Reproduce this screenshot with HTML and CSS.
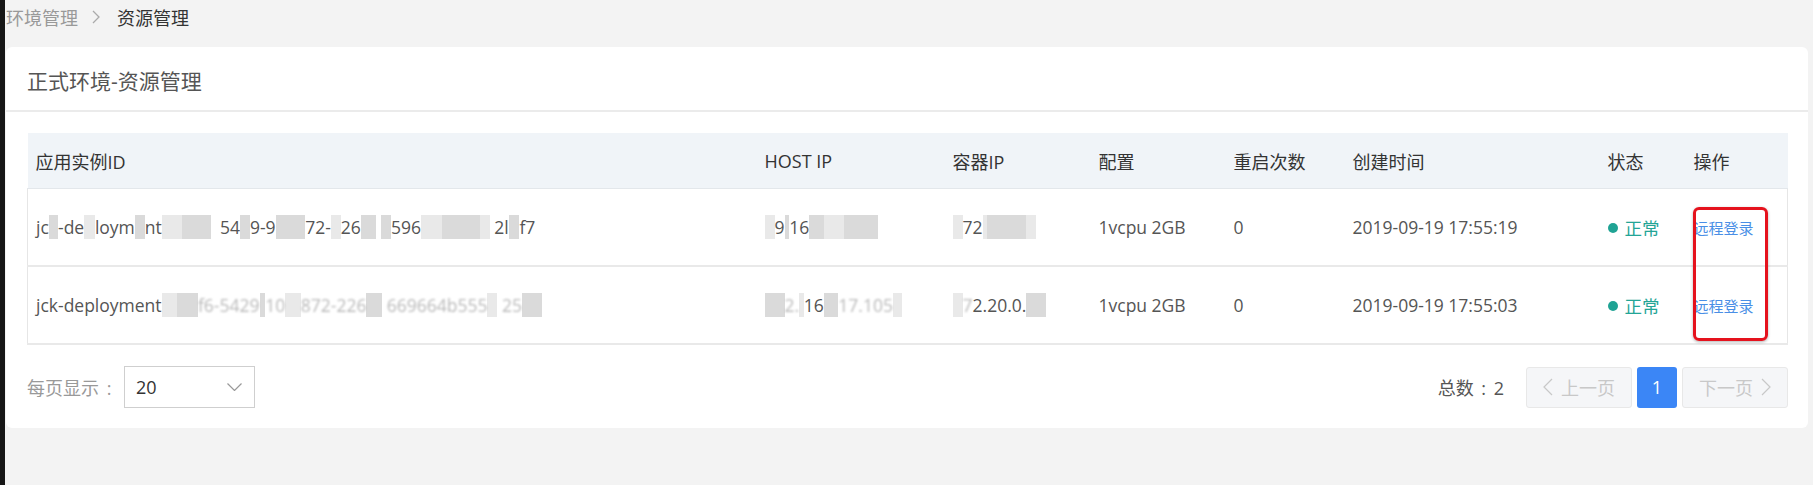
FILE: index.html
```html
<!DOCTYPE html>
<html lang="zh-CN">
<head>
  <meta charset="UTF-8" />
  <title>资源管理</title>
  <link rel="stylesheet" href="styles.css">
</head>
<body>
  <div class="page">

    <div class="breadcrumb">
      <span class="crumb">环境管理</span>
      <svg class="sep" width="8" height="14" viewBox="0 0 8 14"><polyline points="1,1 7,7 1,13" fill="none" stroke="#aaa" stroke-width="1.3"/></svg>
      <span class="crumb current">资源管理</span>
    </div>

    <div class="card">
      <div class="card-head">正式环境-资源管理</div>

      <div class="card-body">
        <div class="table-wrap">
          <table class="res-table">
            <colgroup>
              <col style="width:729px">
              <col style="width:188px">
              <col style="width:146px">
              <col style="width:135px">
              <col style="width:119px">
              <col style="width:255px">
              <col style="width:86px">
              <col>
            </colgroup>
            <thead>
              <tr>
                <th>应用实例ID</th>
                <th>HOST IP</th>
                <th>容器IP</th>
                <th>配置</th>
                <th>重启次数</th>
                <th>创建时间</th>
                <th>状态</th>
                <th>操作</th>
              </tr>
            </thead>
            <tbody>
              <tr>
                <td>jc<span class="m">k</span>-de<span class="m lt">p</span>loym<span class="m">e</span>nt<span class="m lt">-j7</span><span class="m">d8c</span>&nbsp;&nbsp;54<span class="m">2</span>9-9<span class="m">a4e</span>72-<span class="m lt">4</span>26<span class="m">8-</span>&nbsp;<span class="m">8</span>596<span class="m lt">6b</span><span class="m">0c1e</span><span class="m lt">a</span>&nbsp;2l<span class="m">b</span>f7</td>
                <td><span class="m lt">1</span>9<span class="m">.</span>16<span class="m">8.</span><span class="m lt">17</span><span class="m">.200</span></td>
                <td><span class="m lt">1</span>72<span class="m lt">.</span><span class="m">20.0.</span><span class="m lt">9</span></td>
                <td>1vcpu 2GB</td>
                <td>0</td>
                <td>2019-09-19 17:55:19</td>
                <td><span class="status"><i class="dot"></i>正常</span></td>
                <td><a class="link" href="#">远程登录</a></td>
              </tr>
              <tr>
                <td>jck-deployment<span class="m lt">-7</span><span class="m">d8</span><span class="fz">f6-5429</span><span class="m">-</span><span class="fz">10</span><span class="m lt">-4</span><span class="fz">872-226</span><span class="m">4-</span>&nbsp;<span class="fz">669664b555</span><span class="m lt">1</span>&nbsp;<span class="fz">25</span><span class="m">ab</span></td>
                <td><span class="m">19</span><span class="fz">2.</span><span class="m lt">.</span>16<span class="m">8.</span><span class="fz">17.105</span><span class="m lt">..</span></td>
                <td><span class="m lt">1</span><span class="fz">7</span>2.20.0.<span class="m">15</span></td>
                <td>1vcpu 2GB</td>
                <td>0</td>
                <td>2019-09-19 17:55:03</td>
                <td><span class="status"><i class="dot"></i>正常</span></td>
                <td><a class="link" href="#">远程登录</a></td>
              </tr>
            </tbody>
          </table>
          <!-- annotation box drawn over the action column -->
          <div class="mark"></div>
        </div>

        <div class="pager">
          <div class="pager-left">
            <span class="label">每页显示<span class="colon">:</span></span>
            <div class="select">
              <span>20</span>
              <svg width="15" height="8" viewBox="0 0 15 8"><polyline points="0.5,0.5 7.5,7.5 14.5,0.5" fill="none" stroke="#999" stroke-width="1.2"/></svg>
            </div>
          </div>
          <div class="pager-right">
            <span class="total">总数<span class="colon">:</span>2</span>
            <span class="page-btn disabled">
              <svg width="10" height="18" viewBox="0 0 10 18"><polyline points="9,1 1,9 9,17" fill="none" stroke="#c8c8c8" stroke-width="1.2"/></svg>
              上一页
            </span>
            <span class="page-btn num">1</span>
            <span class="page-btn disabled">
              下一页
              <svg width="10" height="18" viewBox="0 0 10 18"><polyline points="1,1 9,9 1,17" fill="none" stroke="#c8c8c8" stroke-width="1.2"/></svg>
            </span>
          </div>
        </div>
      </div>
    </div>

  </div>
</body>
</html>
```

FILE: styles.css
```css
body {
  margin: 0;
  background: #f3f3f3;
  font-family: "Open Sans", "Noto Sans CJK SC", sans-serif;
  color: #555;
}

.page {
  min-height: 485px;
  border-left: 5px solid #161616;
  padding: 0 5px 0 1px;
  box-sizing: border-box;
}

/* breadcrumb */
.breadcrumb {
  display: flex;
  align-items: center;
  height: 34px;
  font-size: 18px;
  color: #999;
}

.breadcrumb .sep {
  margin: 0 17px 0 14px;
}

.breadcrumb .current {
  color: #333;
}

/* card */
.card {
  margin-top: 13px;
  background: #fff;
  border-radius: 6px;
}

.card-head {
  height: 65px;
  padding: 6px 21px 0;
  box-sizing: border-box;
  line-height: 57px;
  font-size: 21px;
  color: #555;
  border-bottom: 2px solid #ebebeb;
}

.card-body {
  padding: 21px 20px 20px 21px;
}

/* table */
.table-wrap {
  position: relative;
}

.res-table {
  width: 100%;
  table-layout: fixed;
  border-collapse: collapse;
  font-size: 17.5px;
}

.res-table th {
  height: 55px;
  padding: 0 0 0 8px;
  text-align: left;
  font-weight: normal;
  font-size: 18px;
  color: #333;
  background: #f0f4f8;
  border-bottom: 1px solid #e3e7eb;
}

.res-table td {
  height: 76px;
  padding: 0 0 0 8px;
  white-space: nowrap;
  overflow: hidden;
  color: #555;
  border-bottom: 2px solid #e9e9e9;
}

.res-table tbody tr td:first-child {
  border-left: 1.5px solid #e6e6e6;
}

.res-table tbody tr td:last-child {
  border-right: 1.5px solid #e6e6e6;
}

/* mosaic blur on private values */
.m {
  background: #dadada;
  color: transparent;
}

.m.lt {
  background: #e9e9e9;
}

.fz {
  display: inline-block;
  color: #b9b9b9;
  filter: blur(1.1px);
}

.status {
  display: inline-flex;
  align-items: center;
  color: #23a596;
}

.dot {
  width: 10px;
  height: 10px;
  border-radius: 50%;
  background: #1fa394;
  margin-right: 7px;
}

.link {
  font-size: 15px;
  color: #4a8fe6;
  text-decoration: none;
}

.mark {
  position: absolute;
  left: 1666px;
  top: 74px;
  width: 75px;
  height: 134px;
  box-sizing: border-box;
  border: 3px solid #e5121d;
  border-radius: 6px;
  box-shadow: 0 1px 3px rgba(0, 0, 0, 0.3);
  pointer-events: none;
}

/* pager */
.pager {
  display: flex;
  justify-content: space-between;
  align-items: center;
  margin-top: 21px;
  font-size: 18px;
}

.pager-left,
.pager-right {
  display: flex;
  align-items: center;
}

.colon {
  display: inline-block;
  width: 20px;
  text-align: center;
}

.label {
  color: #999;
  margin-right: 5px;
}

.select {
  width: 131px;
  height: 42px;
  box-sizing: border-box;
  border: 1.5px solid #cfcfcf;
  padding: 0 12px 0 11px;
  display: flex;
  align-items: center;
  justify-content: space-between;
  color: #333;
}

.total {
  color: #555;
  margin-right: 17px;
}

.page-btn {
  height: 41px;
  box-sizing: border-box;
  display: flex;
  align-items: center;
  justify-content: center;
  gap: 8px;
  margin-left: 5px;
  border-radius: 3px;
}

.page-btn.disabled {
  width: 106px;
  background: #f5f6f8;
  border: 1.5px solid #e8e8e8;
  color: #c8c8c8;
}

.page-btn.num {
  width: 40px;
  background: #3b86f6;
  color: #fff;
}
```
